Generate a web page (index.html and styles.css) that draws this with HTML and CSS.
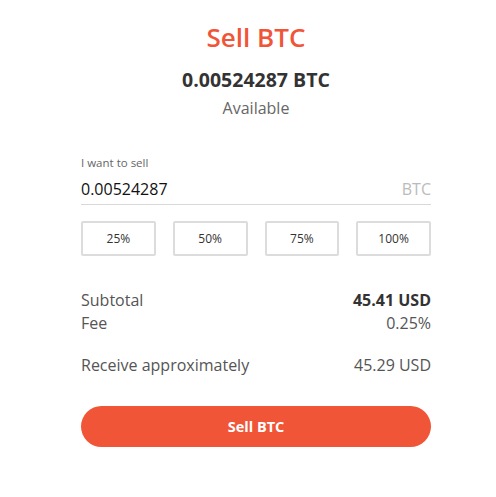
FILE: index.html
```html
<!DOCTYPE html>
<html lang="en">
<head>
  <meta charset="UTF-8">
  <title>Sell BTC</title>
  <link rel="stylesheet" href="styles.css">
</head>
<body>
  <div class="panel">
    <h1 class="title">Sell BTC</h1>
    <div class="balance">0.00524287 BTC</div>
    <div class="available">Available</div>

    <div class="field">
      <label class="field-label">I want to sell</label>
      <div class="field-row">
        <span class="field-value">0.00524287</span>
        <span class="field-unit">BTC</span>
      </div>
    </div>

    <div class="presets">
      <button class="preset">25%</button>
      <button class="preset">50%</button>
      <button class="preset">75%</button>
      <button class="preset">100%</button>
    </div>

    <div class="summary">
      <div class="line"><span>Subtotal</span><span class="strong">45.41 USD</span></div>
      <div class="line"><span>Fee</span><span>0.25%</span></div>
      <div class="line receive"><span>Receive approximately</span><span>45.29 USD</span></div>
    </div>

    <button class="sell-button">Sell BTC</button>
  </div>
</body>
</html>
```

FILE: styles.css
```css
body {
  margin: 0;
  padding: 0;
  background: #fff;
  font-family: 'Open Sans', sans-serif;
  color: #555;
}

.panel {
  width: 350px;
  margin-left: 81px;
  padding-top: 19px;
  text-align: center;
}

.title {
  margin: 0;
  font-size: 26px;
  font-weight: 600;
  color: #f05537;
  line-height: 36px;
}

.balance {
  margin-top: 12px;
  font-size: 19.5px;
  font-weight: 700;
  color: #333;
  line-height: 26px;
}

.available {
  margin-top: 4px;
  font-size: 16px;
  color: #666;
  line-height: 22px;
}

.field {
  margin-top: 36px;
  text-align: left;
  border-bottom: 1px solid #d8d8d8;
}

.field-label {
  display: block;
  font-size: 11.5px;
  color: #666;
  line-height: 16px;
}

.field-row {
  display: flex;
  justify-content: space-between;
  align-items: center;
  padding: 6px 0 3px;
}

.field-value {
  font-size: 16px;
  color: #111;
  line-height: 24px;
}

.field-unit {
  font-size: 16px;
  color: #bbb;
}

.presets {
  display: flex;
  gap: 17px;
  margin-top: 16px;
}

.preset {
  flex: 1;
  height: 35px;
  background: #fff;
  border: 2px solid #dcdcdc;
  border-radius: 2px;
  font-family: 'Open Sans', sans-serif;
  font-size: 12px;
  color: #333;
  cursor: pointer;
}

.summary {
  margin-top: 33px;
}

.line {
  display: flex;
  justify-content: space-between;
  font-size: 16px;
  line-height: 23px;
  color: #555;
}

.line .strong {
  font-weight: 700;
  color: #333;
}

.line.receive {
  margin-top: 19px;
}

.sell-button {
  display: block;
  width: 100%;
  height: 41px;
  margin-top: 29px;
  background: #f05537;
  border: none;
  border-radius: 21px;
  color: #fff;
  font-family: 'Open Sans', sans-serif;
  font-size: 14.5px;
  font-weight: 700;
  cursor: pointer;
}
```
